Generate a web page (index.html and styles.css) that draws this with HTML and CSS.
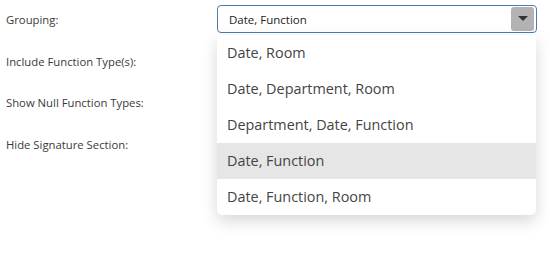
FILE: index.html
```html
<!DOCTYPE html>
<html>
<head>
<meta charset="utf-8">
<link rel="stylesheet" href="styles.css">
</head>
<body>
<div class="form">
  <div class="row">
    <label class="label">Grouping:</label>
    <div class="field">
      <div class="select">
        <span class="value">Date, Function</span>
        <span class="btn"><svg width="10" height="6" viewBox="0 0 10 6"><path d="M0 0H10L5 5Z" fill="#333"/></svg></span>
      </div>
      <ul class="menu">
        <li>Date, Room</li>
        <li>Date, Department, Room</li>
        <li>Department, Date, Function</li>
        <li class="active">Date, Function</li>
        <li>Date, Function, Room</li>
      </ul>
    </div>
  </div>
  <div class="row"><label class="label">Include Function Type(s):</label></div>
  <div class="row"><label class="label">Show Null Function Types:</label></div>
  <div class="row"><label class="label">Hide Signature Section:</label></div>
</div>
</body>
</html>
```
FILE: styles.css
```css
html, body { margin: 0; padding: 0; background: #fff; height: 100%; }
body { font-family: "Open Sans", "Noto Sans", sans-serif; color: #333; min-height: 253px; }
.form { display: flex; flex-direction: column; padding: 5px 0 0 6px; min-height: 240px; }
.row { display: flex; align-items: flex-start; height: 41.7px; }
.label { width: 211px; font-size: 11.3px; line-height: 29px; color: #3a3a3a; }
.field { position: relative; width: 320px; }
.select {
  box-sizing: border-box; height: 28px; border: 1px solid #4a7cae; border-radius: 4px;
  display: flex; align-items: center; justify-content: space-between; padding: 0 2px 0 11px;
  font-size: 11.5px; color: #222;
}
.btn { width: 23px; height: 24px; background: #b3b3b3; border-radius: 3px; display: flex; align-items: center; justify-content: center; }
.menu {
  position: absolute; left: 0; top: 30px; width: 319px; margin: 0; padding: 0; list-style: none;
  background: #fff; border-radius: 0 0 5px 5px; box-shadow: 0 6px 16px rgba(0,0,0,0.16);
  z-index: 2;
}
.menu li { height: 36px; line-height: 35px; padding-left: 10px; font-size: 14.4px; color: #444; }
.menu li.active { background: #e6e6e6; }
```
